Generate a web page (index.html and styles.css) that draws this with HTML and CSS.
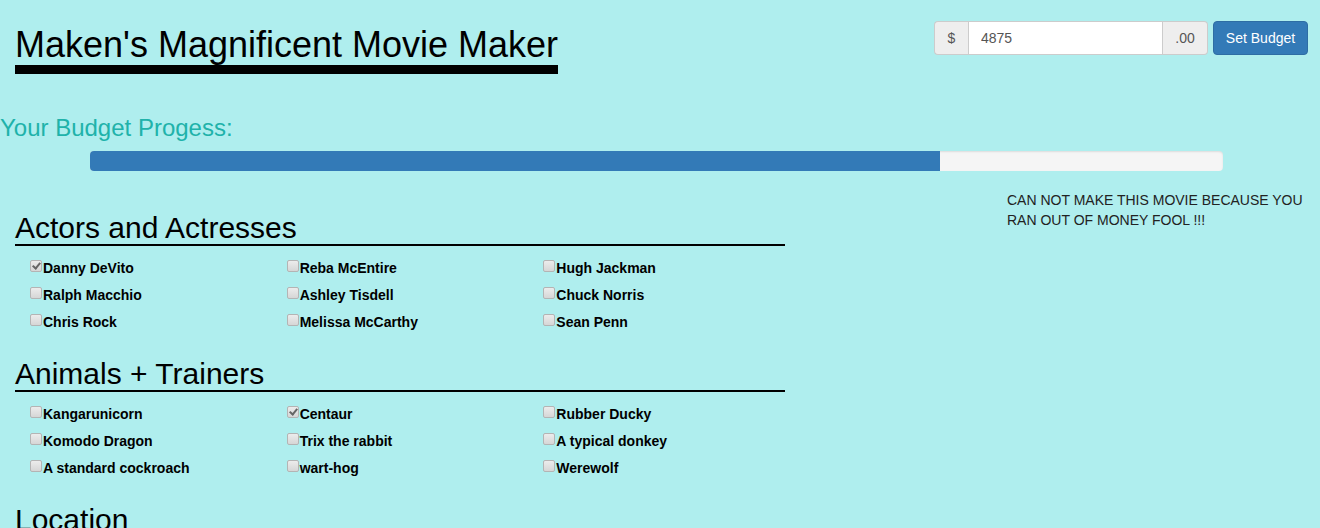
FILE: index.html
```html
<!DOCTYPE html>
<html>
<head>
<meta charset="utf-8">
<title>Maken's Magnificent Movie Maker</title>
<link rel="stylesheet" href="styles.css">
</head>
<body>
<header class="top">
  <h1 class="title">Maken's Magnificent Movie Maker</h1>
  <form class="budget">
    <div class="input-group">
      <span class="addon addon-left">$</span>
      <input class="amount" type="text" value="4875">
      <span class="addon addon-right">.00</span>
    </div>
    <button type="button" class="btn">Set Budget</button>
  </form>
</header>

<h3 class="progress-label">Your Budget Progess:</h3>
<div class="progress"><div class="progress-bar" style="width:75%"></div></div>

<div class="main">
  <div class="choices">
    <section class="group">
      <h2 class="group-title">Actors and Actresses</h2>
      <div class="options">
        <label class="opt"><input type="checkbox" class="cb" checked disabled>Danny DeVito</label>
        <label class="opt"><input type="checkbox" class="cb" disabled>Reba McEntire</label>
        <label class="opt"><input type="checkbox" class="cb" disabled>Hugh Jackman</label>
        <label class="opt"><input type="checkbox" class="cb" disabled>Ralph Macchio</label>
        <label class="opt"><input type="checkbox" class="cb" disabled>Ashley Tisdell</label>
        <label class="opt"><input type="checkbox" class="cb" disabled>Chuck Norris</label>
        <label class="opt"><input type="checkbox" class="cb" disabled>Chris Rock</label>
        <label class="opt"><input type="checkbox" class="cb" disabled>Melissa McCarthy</label>
        <label class="opt"><input type="checkbox" class="cb" disabled>Sean Penn</label>
      </div>
    </section>
    <section class="group">
      <h2 class="group-title">Animals + Trainers</h2>
      <div class="options">
        <label class="opt"><input type="checkbox" class="cb" disabled>Kangarunicorn</label>
        <label class="opt"><input type="checkbox" class="cb" checked disabled>Centaur</label>
        <label class="opt"><input type="checkbox" class="cb" disabled>Rubber Ducky</label>
        <label class="opt"><input type="checkbox" class="cb" disabled>Komodo Dragon</label>
        <label class="opt"><input type="checkbox" class="cb" disabled>Trix the rabbit</label>
        <label class="opt"><input type="checkbox" class="cb" disabled>A typical donkey</label>
        <label class="opt"><input type="checkbox" class="cb" disabled>A standard cockroach</label>
        <label class="opt"><input type="checkbox" class="cb" disabled>wart-hog</label>
        <label class="opt"><input type="checkbox" class="cb" disabled>Werewolf</label>
      </div>
    </section>
    <section class="group">
      <h2 class="group-title">Location</h2>
    </section>
  </div>
  <p class="warning">CAN NOT MAKE THIS MOVIE BECAUSE YOU RAN OUT OF MONEY FOOL !!!</p>
</div>
</body>
</html>
```

FILE: styles.css
```css
html, body {
  margin: 0;
  padding: 0;
}
body {
  background: #afeeee;
  font-family: "Liberation Sans", Arial, sans-serif;
  font-size: 14px;
  line-height: 20px;
  color: #000;
  overflow: hidden;
}

.top {
  display: flex;
  justify-content: space-between;
  align-items: flex-start;
}
.title {
  margin: 25px 0 0 15px;
  font-size: 36px;
  font-weight: normal;
  line-height: 40px;
  border-bottom: 9px solid #000;
}

.budget {
  display: flex;
  margin: 21px 12px 0 0;
}
.input-group {
  display: flex;
  height: 34px;
}
.addon {
  box-sizing: border-box;
  height: 34px;
  padding: 6px 0;
  font-size: 14px;
  line-height: 20px;
  color: #555;
  background: #eee;
  border: 1px solid #ccc;
  text-align: center;
}
.addon-left {
  width: 34px;
  border-radius: 4px 0 0 4px;
  border-right: 0;
}
.addon-right {
  width: 45px;
  border-radius: 0 4px 4px 0;
  border-left: 0;
}
.amount {
  box-sizing: border-box;
  width: 195px;
  height: 34px;
  margin: 0;
  padding: 6px 12px;
  font-family: inherit;
  font-size: 14px;
  color: #555;
  background: #fff;
  border: 1px solid #ccc;
  outline: none;
}
.btn {
  box-sizing: border-box;
  height: 34px;
  width: 95px;
  margin-left: 5px;
  padding: 6px 0;
  font-family: inherit;
  font-size: 14px;
  line-height: 20px;
  white-space: nowrap;
  color: #fff;
  background: #337ab7;
  border: 1px solid #2e6da4;
  border-radius: 4px;
}

.progress-label {
  margin: 41px 0 0 0;
  font-size: 24px;
  font-weight: normal;
  line-height: 26px;
  color: #20b2aa;
}
.progress {
  box-sizing: border-box;
  width: 1133px;
  height: 20px;
  margin: 10px 0 0 90px;
  background: #f5f5f5;
  border-radius: 4px;
  overflow: hidden;
  box-shadow: inset 0 1px 2px rgba(0, 0, 0, 0.1);
}
.progress-bar {
  height: 100%;
  background: #337ab7;
}

.main {
  display: flex;
  align-items: flex-start;
}
.choices {
  width: 770px;
  margin-left: 15px;
}
.group {
  margin-top: 40px;
}
.group + .group {
  margin-top: 22px;
}
.group-title {
  margin: 0;
  font-size: 30px;
  font-weight: normal;
  line-height: 33px;
  border-bottom: 2px solid #000;
}
.options {
  display: grid;
  grid-template-columns: repeat(3, 1fr);
  margin-top: 8px;
}
.opt {
  display: flex;
  align-items: center;
  height: 27px;
  padding-left: 15px;
  font-weight: bold;
  font-size: 14px;
}
.cb {
  -webkit-appearance: none;
  appearance: none;
  box-sizing: border-box;
  width: 12px;
  height: 12px;
  margin: 0 1px 4px 0;
  border: 1px solid #b4b4b4;
  border-radius: 2px;
  background: linear-gradient(#ececec, #d6d6d6);
  flex: none;
  position: relative;
}
.cb:checked::after {
  content: "";
  position: absolute;
  left: 3px;
  top: 0px;
  width: 3px;
  height: 6px;
  border: solid #666;
  border-width: 0 2px 2px 0;
  transform: rotate(40deg);
}

.warning {
  width: 300px;
  margin: 19px 0 0 222px;
  font-size: 14px;
  line-height: 20px;
  color: #222;
}
```
